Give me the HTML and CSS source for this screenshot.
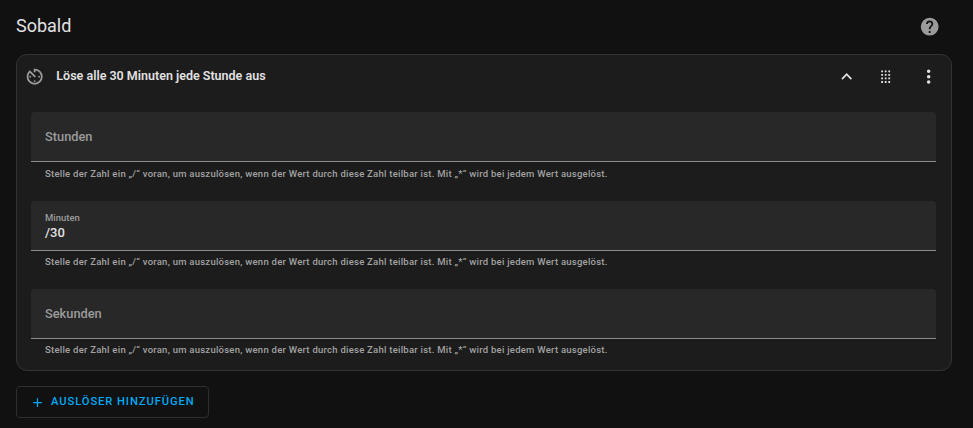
FILE: index.html
```html
<!DOCTYPE html>
<html lang="de">
<head>
  <meta charset="UTF-8" />
  <title>Automatisierung - Auslöser</title>
  <link rel="stylesheet" href="styles.css">
</head>
<body>

  <div class="header">
    <h2>Sobald</h2>
    <svg class="icon help" viewBox="0 0 24 24"><path d="M15.07,11.25L14.17,12.17C13.45,12.89 13,13.5 13,15H11V14.5C11,13.39 11.45,12.39 12.17,11.67L13.41,10.41C13.78,10.05 14,9.55 14,9C14,7.89 13.1,7 12,7A2,2 0 0,0 10,9H8A4,4 0 0,1 12,5A4,4 0 0,1 16,9C16,9.88 15.64,10.67 15.07,11.25M13,19H11V17H13M12,2A10,10 0 0,0 2,12A10,10 0 0,0 12,22A10,10 0 0,0 22,12C22,6.47 17.5,2 12,2Z"/></svg>
  </div>

  <div class="card">
    <div class="card-header">
      <svg class="icon timer" viewBox="0 0 24 24"><path d="M11,17A1,1 0 0,0 12,18A1,1 0 0,0 13,17A1,1 0 0,0 12,16A1,1 0 0,0 11,17M11,3V7H13V5.08C16.39,5.57 19,8.47 19,12A7,7 0 0,1 12,19A7,7 0 0,1 5,12C5,10.32 5.59,8.78 6.58,7.58L12,13L13.41,11.59L6.61,4.79V4.81C4.42,6.45 3,9.05 3,12A9,9 0 0,0 12,21A9,9 0 0,0 21,12A9,9 0 0,0 12,3M18,12A1,1 0 0,0 17,11A1,1 0 0,0 16,12A1,1 0 0,0 17,13A1,1 0 0,0 18,12M6,12A1,1 0 0,0 7,13A1,1 0 0,0 8,12A1,1 0 0,0 7,11A1,1 0 0,0 6,12Z"/></svg>
      <h3>Löse alle 30 Minuten jede Stunde aus</h3>
      <div class="actions">
        <svg class="icon" viewBox="0 0 24 24"><path d="M7.41,15.41L12,10.83L16.59,15.41L18,14L12,8L6,14L7.41,15.41Z"/></svg>
        <svg class="icon drag" viewBox="0 0 24 24"><path d="M7,19V17H9V19H7M11,19V17H13V19H11M15,19V17H17V19H15M7,15V13H9V15H7M11,15V13H13V15H11M15,15V13H17V15H15M7,11V9H9V11H7M11,11V9H13V11H11M15,11V9H17V11H15M7,7V5H9V7H7M11,7V5H13V7H11M15,7V5H17V7H15Z"/></svg>
        <svg class="icon" viewBox="0 0 24 24"><path d="M12,16A2,2 0 0,1 14,18A2,2 0 0,1 12,20A2,2 0 0,1 10,18A2,2 0 0,1 12,16M12,10A2,2 0 0,1 14,12A2,2 0 0,1 12,14A2,2 0 0,1 10,12A2,2 0 0,1 12,10M12,4A2,2 0 0,1 14,6A2,2 0 0,1 12,8A2,2 0 0,1 10,6A2,2 0 0,1 12,4Z"/></svg>
      </div>
    </div>

    <div class="fields">
      <div class="field">
        <div class="input"><span class="label">Stunden</span></div>
        <div class="helper">Stelle der Zahl ein „/“ voran, um auszulösen, wenn der Wert durch diese Zahl teilbar ist. Mit „*“ wird bei jedem Wert ausgelöst.</div>
      </div>
      <div class="field">
        <div class="input filled"><span class="label">Minuten</span><span class="value">/30</span></div>
        <div class="helper">Stelle der Zahl ein „/“ voran, um auszulösen, wenn der Wert durch diese Zahl teilbar ist. Mit „*“ wird bei jedem Wert ausgelöst.</div>
      </div>
      <div class="field">
        <div class="input"><span class="label">Sekunden</span></div>
        <div class="helper">Stelle der Zahl ein „/“ voran, um auszulösen, wenn der Wert durch diese Zahl teilbar ist. Mit „*“ wird bei jedem Wert ausgelöst.</div>
      </div>
    </div>
  </div>

  <button class="add">
    <svg viewBox="0 0 24 24"><path d="M19,13H13V19H11V13H5V11H11V5H13V11H19V13Z"/></svg>
    <span>Auslöser hinzufügen</span>
  </button>

</body>
</html>
```
FILE: styles.css
```css
* {
  box-sizing: border-box;
}

body {
  margin: 0;
  height: 428px;
  padding: 0 21px 0 16px;
  background-color: #111111;
  color: #e1e1e1;
  font-family: Roboto, sans-serif;
  overflow: hidden;
}

.icon {
  display: block;
  flex: none;
  width: 21.33px;
  height: 21.33px;
  fill: #e1e1e1;
}

.header {
  display: flex;
  justify-content: space-between;
  align-items: center;
  height: 54px;
  padding-right: 11.5px;
}

h2 {
  margin: 0 0 2px;
  font-size: 18px;
  font-weight: 400;
  line-height: 24px;
}

.icon.help {
  fill: #9b9b9b;
}

.card {
  height: 317px;
  background-color: #1c1c1c;
  border: 1px solid #333333;
  border-radius: 11px;
}

.card-header {
  display: flex;
  align-items: center;
  height: 43px;
  padding: 0 12px 0 7px;
}

.icon.timer {
  fill: #9b9b9b;
}

h3 {
  flex: 1;
  margin: 0 0 2px 11px;
  font-size: 12.5px;
  font-weight: 600;
}

.actions {
  display: flex;
  gap: 19.5px;
}

.icon.drag {
  margin-left: -1.5px;
  margin-right: 2px;
}

.fields {
  padding: 14px 15px 0 14px;
}

.field {
  height: 88.5px;
}

.input {
  display: flex;
  flex-direction: column;
  justify-content: center;
  height: 50px;
  padding: 0 14px;
  background-color: #282828;
  border-bottom: 1px solid #8c8c8c;
  border-radius: 4px 4px 0 0;
}

.label {
  color: #9b9b9b;
  font-size: 12.8px;
  font-weight: 500;
}

.filled .label {
  font-size: 9.5px;
  line-height: 12px;
  margin-top: 4px;
}

.value {
  font-size: 13px;
  font-weight: 500;
  line-height: 18px;
}

.helper {
  padding: 4.4px 14px 0;
  color: #a2a2a2;
  font-size: 9.5px;
  font-weight: 500;
  line-height: 14px;
  letter-spacing: 0.25px;
  white-space: nowrap;
}

.field:first-child .helper {
  padding-top: 5px;
}

.add {
  display: flex;
  align-items: center;
  width: 193px;
  height: 32px;
  margin-top: 15px;
  padding: 0 13px 1px;
  background: none;
  border: 1px solid #2e2e2e;
  border-radius: 4px;
  color: #03a9f4;
  font-family: inherit;
  font-size: 11.2px;
  font-weight: 500;
  letter-spacing: 0.92px;
  text-transform: uppercase;
  white-space: nowrap;
}

.add svg {
  flex: none;
  width: 15px;
  height: 15px;
  margin: 1px 6px 0 0;
  fill: #03a9f4;
}
```
